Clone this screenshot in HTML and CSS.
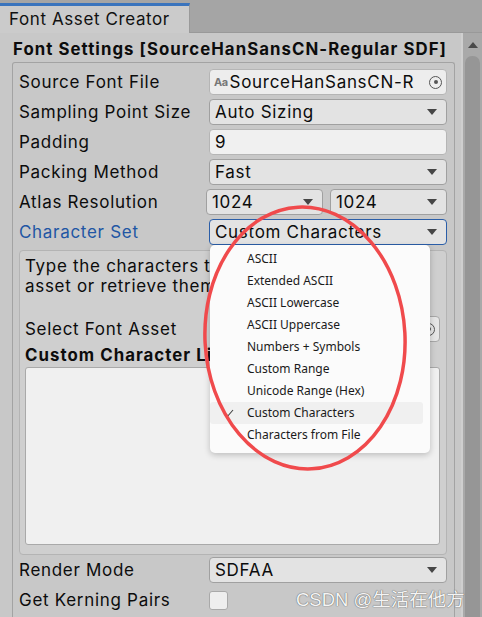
FILE: index.html
```html
<!DOCTYPE html>
<html>
<head>
<meta charset="utf-8">
<link rel="stylesheet" href="styles.css">
</head>
<body>
<div class="window">
  <div class="tabbar">
    <div class="tab">Font Asset Creator</div>
  </div>
  <div class="main">
    <div class="content">
      <div class="title">Font Settings [SourceHanSansCN-Regular SDF]</div>
      <div class="panel">
        <div class="row">
          <div class="label">Source Font File</div>
          <div class="field objfield">
            <span class="aa">Aa</span><span class="objtext">SourceHanSansCN-R</span>
            <span class="picker"></span>
          </div>
        </div>
        <div class="row">
          <div class="label">Sampling Point Size</div>
          <div class="field dropdown"><span>Auto Sizing</span><span class="arrow"></span></div>
        </div>
        <div class="row">
          <div class="label">Padding</div>
          <div class="field textfield"><span>9</span></div>
        </div>
        <div class="row">
          <div class="label">Packing Method</div>
          <div class="field dropdown"><span>Fast</span><span class="arrow"></span></div>
        </div>
        <div class="row">
          <div class="label">Atlas Resolution</div>
          <div class="pair">
            <div class="field dropdown small"><span>1024</span><span class="arrow"></span></div>
            <div class="field dropdown small"><span>1024</span><span class="arrow"></span></div>
          </div>
        </div>
        <div class="row">
          <div class="label blue">Character Set</div>
          <div class="field dropdown focused"><span>Custom Characters</span><span class="arrow"></span></div>
        </div>
        <div class="helpbox">
          <div class="helptext">Type the characters to be included in the font asset or retrieve them from another font asset.</div>
          <div class="selrow">
            <div class="sellabel">Select Font Asset</div>
            <div class="selfield"><span class="picker"></span></div>
          </div>
          <div class="listlabel">Custom Character List</div>
          <div class="textarea"></div>
        </div>
        <div class="row">
          <div class="label">Render Mode</div>
          <div class="field dropdown"><span>SDFAA</span><span class="arrow"></span></div>
        </div>
        <div class="row">
          <div class="label">Get Kerning Pairs</div>
          <div class="checkbox"></div>
        </div>
      </div>
    </div>
    <div class="scrollbar">
      <div class="uparrow"></div>
      <div class="thumb"></div>
    </div>
  </div>

  <div class="popup">
    <div class="item">ASCII</div>
    <div class="item">Extended ASCII</div>
    <div class="item">ASCII Lowercase</div>
    <div class="item">ASCII Uppercase</div>
    <div class="item">Numbers + Symbols</div>
    <div class="item">Custom Range</div>
    <div class="item">Unicode Range (Hex)</div>
    <div class="item selected"><span class="check">
      <svg width="10" height="8" viewBox="0 0 10 8"><path d="M1 4.2 L3.8 7 L9 1" fill="none" stroke="#444" stroke-width="1.1"/></svg>
    </span>Custom Characters</div>
    <div class="item">Characters from File</div>
  </div>

  <svg class="ring" width="220" height="280" viewBox="0 0 220 280">
    <ellipse cx="110" cy="138" rx="100" ry="131" fill="none" stroke="#f04a4c" stroke-width="3.5" transform="rotate(-3 110 138)"/>
  </svg>

  <div class="watermark">CSDN @生活在他方</div>
</div>
</body>
</html>
```

FILE: styles.css
```css
html, body {
  margin: 0;
  padding: 0;
}
body {
  width: 482px;
  height: 617px;
  overflow: hidden;
  background: #c8c8c8;
  font-family: Inter, "Liberation Sans", "Noto Sans CJK SC", sans-serif;
  color: #0c0c0c;
}
.window {
  position: relative;
  width: 482px;
  height: 617px;
  overflow: hidden;
}
.tabbar {
  height: 33px;
  background: #a5a5a5;
  border-bottom: 1px solid #999999;
  box-sizing: border-box;
  display: flex;
  align-items: flex-end;
}
.tab {
  width: 190px;
  height: 30px;
  box-sizing: border-box;
  background: #cbcbcb;
  border-top: 3px solid #3a74bd;
  border-right: 1px solid #9a9a9a;
  font-size: 17px;
  letter-spacing: 0.6px;
  line-height: 26px;
  padding-left: 9px;
  color: #111;
  margin-bottom: -1px;
}
.main {
  display: flex;
  height: 584px;
}
.content {
  flex: 1;
  padding-left: 12px;
  padding-right: 6px;
}
.title {
  font-weight: 700;
  font-size: 16.8px;
  height: 29px;
  line-height: 33px;
  padding-left: 1px;
  white-space: nowrap;
  letter-spacing: 1.05px;
}
.panel {
  border: 1px solid #a3a3a3;
  border-radius: 3px;
  border-bottom: none;
  height: 560px;
  padding: 4px 7px 0 6px;
  box-sizing: border-box;
}
.row {
  display: flex;
  align-items: center;
  height: 30px;
}
.label {
  width: 190px;
  flex-shrink: 0;
  font-size: 17px;
  letter-spacing: 0.7px;
  white-space: nowrap;
}
.label.blue {
  color: #2156a4;
}
.field {
  flex: 1;
  height: 26px;
  box-sizing: border-box;
  border: 1px solid #a8a8a8;
  border-radius: 4px;
  display: flex;
  align-items: center;
  font-size: 17px;
  letter-spacing: 0.7px;
  padding-left: 5px;
  overflow: hidden;
  white-space: nowrap;
}
.dropdown {
  background: #e3e3e3;
  justify-content: space-between;
  padding-right: 9px;
  border-color: #a0a0a0;
}
.dropdown.focused {
  border-color: #2b5ea8;
  border-width: 1.5px;
}
.textfield {
  background: #f0f0f0;
  border-color: #b5b5b5;
}
.objfield {
  background: #ededed;
  border-color: #b5b5b5;
  padding-left: 4px;
  position: relative;
}
.aa {
  font-size: 11px;
  font-weight: 700;
  color: #777;
  margin-right: 2px;
  letter-spacing: -0.5px;
}
.objtext {
  flex: 1;
  overflow: hidden;
}
.picker {
  width: 11px;
  height: 11px;
  border: 1.5px solid #555;
  border-radius: 50%;
  flex-shrink: 0;
  margin: 0 4px 0 4px;
  position: relative;
  box-sizing: content-box;
}
.picker::after {
  content: "";
  position: absolute;
  width: 4px;
  height: 4px;
  background: #555;
  border-radius: 50%;
  left: 3.5px;
  top: 3.5px;
}
.arrow {
  width: 0;
  height: 0;
  border-left: 5.5px solid transparent;
  border-right: 5.5px solid transparent;
  border-top: 6.5px solid #464646;
}
.pair {
  flex: 1;
  display: flex;
  gap: 7px;
  margin-left: -3px;
}
.pair .small {
  flex: 1;
}
.helpbox {
  margin-top: 3px;
  height: 305px;
  box-sizing: border-box;
  border: 1px solid #b4b4b4;
  border-radius: 4px;
  background: #cfcfcf;
  padding: 5px 6px 0 5px;
}
.helptext {
  font-size: 17px;
  letter-spacing: 0.7px;
  line-height: 20px;
  height: 58px;
  overflow: hidden;
  width: 410px;
}
.selrow {
  display: flex;
  align-items: center;
  height: 26px;
  margin-top: 2px;
}
.sellabel {
  flex: 1;
  font-size: 17px;
  letter-spacing: 0.7px;
}
.selfield {
  width: 40px;
  height: 24px;
  border: 1px solid #a8a8a8;
  border-radius: 4px;
  background: #e6e6e6;
  display: flex;
  align-items: center;
  justify-content: flex-end;
}
.listlabel {
  font-weight: 700;
  font-size: 16.8px;
  letter-spacing: 1.05px;
  height: 25px;
  line-height: 26px;
  white-space: nowrap;
}
.textarea {
  height: 178px;
  background: #f0f0f0;
  border: 1px solid #a9a9a9;
  border-radius: 3px;
  box-sizing: border-box;
}
.checkbox {
  width: 19px;
  height: 19px;
  background: #eeeeee;
  border: 1px solid #a9a9a9;
  border-radius: 3px;
  box-sizing: border-box;
}
.scrollbar {
  width: 21px;
  background: #a9a9a9;
  border-left: 2px solid #cfcfcf;
  box-sizing: border-box;
  display: flex;
  flex-direction: column;
  align-items: center;
  padding-top: 9px;
}
.uparrow {
  width: 0;
  height: 0;
  border-left: 5px solid transparent;
  border-right: 5px solid transparent;
  border-bottom: 6px solid #4a4a4a;
}
.thumb {
  margin-top: 8px;
  width: 15px;
  flex: 1;
  background: #969696;
  border-radius: 7px 7px 0 0;
}
.popup {
  position: absolute;
  left: 210px;
  top: 245px;
  width: 220px;
  height: 208px;
  box-sizing: border-box;
  background: #fbfbfb;
  border-radius: 5px;
  box-shadow: 0 2px 6px rgba(0,0,0,0.22);
  padding: 3px 7px 0 0;
  font-family: "Noto Sans", "Noto Sans CJK SC", sans-serif;
  font-size: 12px;
  color: #1a1a1a;
}
.item {
  height: 22px;
  line-height: 22px;
  padding-left: 37px;
  position: relative;
  border-radius: 3px;
  white-space: nowrap;
}
.item.selected {
  background: #f0f0f0;
}
.check {
  position: absolute;
  left: 14px;
  top: 7px;
  line-height: 0;
}
.ring {
  position: absolute;
  left: 195px;
  top: 200px;
}
.watermark {
  position: absolute;
  left: 296px;
  top: 585px;
  font-family: "Liberation Sans", "Noto Sans CJK SC", sans-serif;
  font-size: 18.5px;
  color: #f4f4f4;
  text-shadow: 0 0 1px #666, 0 0 1px #666;
  white-space: nowrap;
}
```
